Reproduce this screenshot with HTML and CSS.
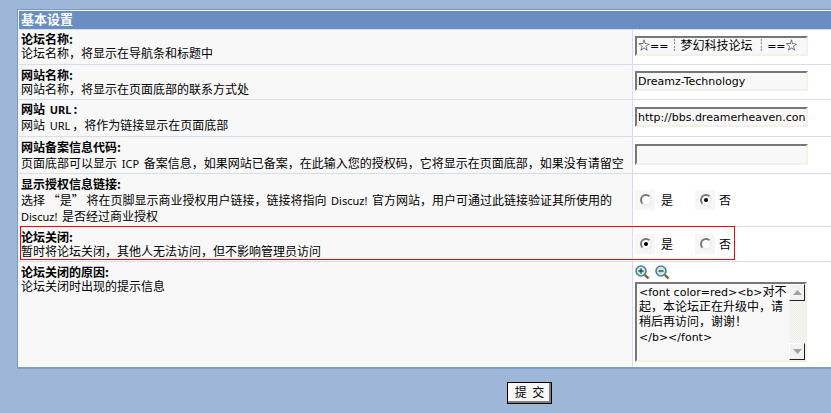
FILE: index.html
```html
<!DOCTYPE html>
<html lang="zh">
<head>
<meta charset="utf-8">
<title>基本设置</title>
<link rel="stylesheet" href="styles.css">
</head>
<body>
<div class="panel">
  <div class="head">基本设置</div>
  <div class="row h35 first">
    <div class="label"><b>论坛名称:</b><span>论坛名称，将显示在导航条和标题中</span></div>
    <div class="field"><div class="input"><span class="zh">☆</span>==<span class="zh">┊梦幻科技论坛 ┊</span>==<span class="zh">☆</span></div></div>
  </div>
  <div class="row h35">
    <div class="label"><b>网站名称:</b><span>网站名称，将显示在页面底部的联系方式处</span></div>
    <div class="field"><div class="input">Dreamz-Technology</div></div>
  </div>
  <div class="row h37 loose up">
    <div class="label"><b>网站 <i>URL</i>:</b><span>网站 <i>URL</i>，将作为链接显示在页面底部</span></div>
    <div class="field wide"><div class="input">http://bbs.dreamerheaven.con</div></div>
  </div>
  <div class="row h37 loose">
    <div class="label"><b>网站备案信息代码:</b><span>页面底部可以显示 <i>ICP</i> 备案信息，如果网站已备案，在此输入您的授权码，它将显示在页面底部，如果没有请留空</span></div>
    <div class="field wide"><div class="input tall"></div></div>
  </div>
  <div class="row h53 loose">
    <div class="label"><b>显示授权信息链接:</b><span>选择 “是” 将在页脚显示商业授权用户链接，链接将指向 <i>Discuz!</i> 官方网站，用户可通过此链接验证其所使用的</span><span><i class="lead">Discuz!</i> 是否经过商业授权</span></div>
    <div class="field radios">
      <label class="radio"><input type="radio" name="lic"><span>是</span></label>
      <label class="radio"><input type="radio" name="lic" checked><span>否</span></label>
    </div>
  </div>
  <div class="row h35">
    <div class="label"><b>论坛关闭:</b><span>暂时将论坛关闭，其他人无法访问，但不影响管理员访问</span></div>
    <div class="field radios">
      <label class="radio"><input type="radio" name="cl" checked><span>是</span></label>
      <label class="radio"><input type="radio" name="cl"><span>否</span></label>
    </div>
    <div class="mark"></div>
  </div>
  <div class="row h106">
    <div class="label"><b>论坛关闭的原因:</b><span>论坛关闭时出现的提示信息</span></div>
    <div class="field stack">
      <div class="zoom">
        <svg width="15" height="15" viewBox="0 0 15 15"><path d="M9.800 9.800l3.700 3.700" stroke="#8a5a3a" stroke-width="2.400"/><circle cx="6" cy="6" r="5" fill="#cfe3e4" stroke="#4c8587" stroke-width="1.600"/><path d="M3.500 6h5M6 3.500v5" stroke="#1f5456" stroke-width="1.400"/></svg>
        <svg width="15" height="15" viewBox="0 0 15 15"><path d="M9.800 9.800l3.700 3.700" stroke="#8a5a3a" stroke-width="2.400"/><circle cx="6" cy="6" r="5" fill="#cfe3e4" stroke="#4c8587" stroke-width="1.600"/><path d="M3.500 6h5" stroke="#1f5456" stroke-width="1.400"/></svg>
      </div>
      <div class="area">
        <div class="area-text">&lt;font color=red&gt;&lt;b&gt;<span class="zh">对不起，本论坛正在升级中，请稍后再访问，谢谢！</span><span class="tail">&lt;/b&gt;&lt;/font&gt;</span></div>
        <div class="bar">
          <div class="btn"><svg width="9" height="5" viewBox="0 0 9 5"><path d="M4.500 0L9 5H0z" fill="#a0a0a0"/></svg></div>
          <div class="track"></div>
          <div class="btn"><svg width="9" height="5" viewBox="0 0 9 5"><path d="M0 0h9L4.500 5z" fill="#a0a0a0"/></svg></div>
        </div>
      </div>
    </div>
  </div>
</div>
<div class="actions"><button class="submit" type="button">提 交</button></div>
</body>
</html>
```
FILE: styles.css
```css
html, body { margin: 0; padding: 0; }
body {
  width: 831px;
  height: 413px;
  overflow: hidden;
  background: #9eb6d8;
  padding-top: 9px;
  box-sizing: border-box;
  font: 12px/16px "Noto Sans CJK SC", "Noto Sans", sans-serif;
  color: #000;
}
.zh { font: 12px/1 "Noto Sans CJK SC", sans-serif; }
.panel {
  margin-left: 17px;
  width: 830px;
  border-top: 1px solid #7a99c8;
  border-left: 1px solid #7a99c8;
  border-bottom: 2px solid #7f9dcb;
  box-sizing: border-box;
  background: #f8f8f8;
  box-shadow: inset 1px 0 0 #f2f6fb;
}
.head {
  height: 19px;
  margin-left: 1px;
  padding-left: 2px;
  border-top: 1px solid #f2f6fb;
  box-sizing: border-box;
  background: #6a8dc2;
  color: #fff;
  font-weight: 700;
  font-size: 13px;
  line-height: 16px;
}
.row {
  display: flex;
  position: relative;
  margin-left: 1px;
  border-top: 1px solid #d3dfef;
  box-sizing: border-box;
}
.h35 { height: 35px; }
.h37 { height: 37px; }
.h53 { height: 53px; }
.h106 { height: 106px; }
.label {
  width: 613px;
  flex: none;
  padding: 2px 0 0 2px;
  box-sizing: border-box;
  display: flex;
  flex-direction: column;
  white-space: nowrap;
  overflow: hidden;
}
.first .label { padding-top: 1px; }
.up .label { padding-top: 1px; }
.label b { font-weight: 700; line-height: 15px; }
.label i {
  font-family: "Noto Sans", sans-serif;
  font-style: normal;
  font-size: 11px;
  line-height: 0;
  margin: 0 2px;
}
.label i.lead { margin-left: 0; }
.label span { line-height: 14px; }
.loose .label span { line-height: 16px; }
.loose .label b + span { margin-top: 1px; }
.field {
  flex: 1;
  border-left: 1px solid #d3dfef;
  background: #fff;
  padding: 6px 0 0 2px;
  box-sizing: border-box;
}
.wide { padding-top: 7px; }
.input {
  width: 173px;
  height: 20px;
  box-sizing: border-box;
  border: 2px solid;
  border-color: #777 #f2f1e6 #f2f1e6 #777;
  background: #f8f8f8;
  padding-left: 1px;
  font: 11px/18px "DejaVu Sans", "Noto Sans CJK SC", sans-serif;
  white-space: nowrap;
  overflow: hidden;
}
.tall { height: 21px; }
.radios { display: flex; align-items: center; padding: 0 0 0 2px; }
.radio { display: flex; align-items: center; width: 60px; }
.radio input {
  appearance: none;
  -webkit-appearance: none;
  margin: 0;
  width: 20px;
  height: 20px;
  flex: none;
  background:
    radial-gradient(circle at 11px 10px, #fff 0 4px, transparent 4.500px),
    #f6f6f6;
  position: relative;
}
.radio input::before {
  content: "";
  position: absolute;
  left: 5px;
  top: 4px;
  width: 12px;
  height: 12px;
  box-sizing: border-box;
  border-radius: 50%;
  border: 2px solid;
  border-color: #777 #eee #eee #777;
}
.radio input:checked::after {
  content: "";
  position: absolute;
  left: 9px;
  top: 8px;
  width: 4px;
  height: 4px;
  border-radius: 50%;
  background: #000;
}
.radio span { margin-left: 6px; line-height: 16px; }
.radio + .radio span { margin-left: 4px; }
.mark {
  position: absolute;
  left: 1px;
  top: -1px;
  width: 715px;
  height: 34px;
  border: 1px solid #f00;
  box-sizing: border-box;
  pointer-events: none;
}
.stack { padding-top: 0; }
.zoom { display: flex; gap: 5px; height: 18px; padding-top: 3px; box-sizing: border-box; }
.area {
  width: 172px;
  height: 80px;
  margin-top: 2px;
  box-sizing: border-box;
  border: 2px solid;
  border-color: #777 #f2f1e6 #f2f1e6 #777;
  background: #f8f8f8;
  display: flex;
}
.area-text {
  width: 152px;
  flex: none;
  padding: 1px 0 0 2px;
  box-sizing: border-box;
  font: 11px/14px "DejaVu Sans", "Noto Sans CJK SC", sans-serif;
  overflow: hidden;
}
.tail { display: block; margin-top: 1px; }
.bar {
  width: 16px;
  flex: none;
  display: flex;
  flex-direction: column;
}
.btn {
  height: 17px;
  flex: none;
  box-sizing: border-box;
  background: #f2f2f2;
  border: 1px solid;
  border-color: #fff #222 #222 #fff;
  display: flex;
  align-items: center;
  justify-content: center;
}
.track {
  flex: 1;
  background: repeating-conic-gradient(#f8f8f8 0 25%, #eeeee6 0 50%) 0 0 / 2px 2px;
}
.actions {
  display: flex;
  padding: 13px 0 0 507px;
}
.submit {
  width: 45px;
  height: 22px;
  margin: 0;
  padding: 0 0 2px;
  border: 1px solid #000;
  box-shadow: inset -2px -2px 0 #808080;
  background: #f8f8f8;
  font: 12px/16px "Noto Sans CJK SC", sans-serif;
  word-spacing: 3px;
  color: #000;
}
```
